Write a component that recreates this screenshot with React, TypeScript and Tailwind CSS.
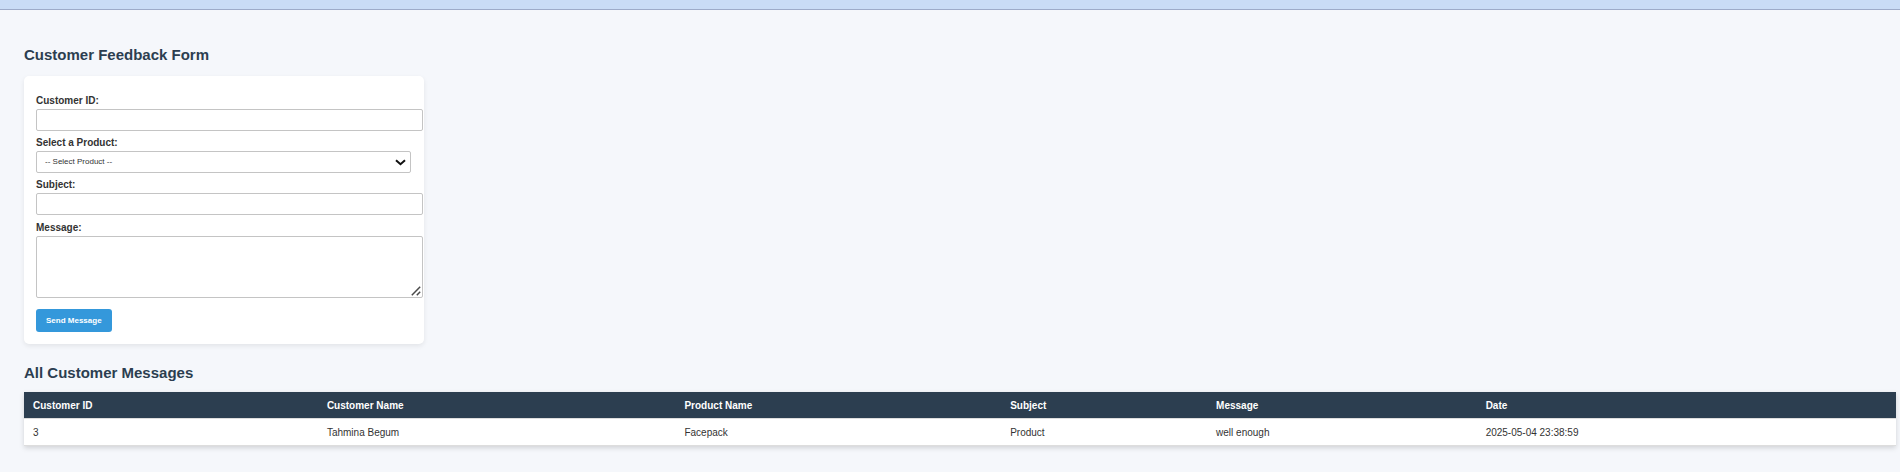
import React from "react";

type Message = {
  customerId: number;
  customerName: string;
  productName: string;
  subject: string;
  message: string;
  date: string;
};

const messages: Message[] = [
  {
    customerId: 3,
    customerName: "Tahmina Begum",
    productName: "Facepack",
    subject: "Product",
    message: "well enough",
    date: "2025-05-04 23:38:59",
  },
];

const columns = [
  { title: "Customer ID", width: "w-[15.7%]" },
  { title: "Customer Name", width: "w-[19.1%]" },
  { title: "Product Name", width: "w-[17.4%]" },
  { title: "Subject", width: "w-[11%]" },
  { title: "Message", width: "w-[14.4%]" },
  { title: "Date", width: "" },
];

const groupClass = "flex flex-col gap-[2px]";
const labelClass = "block text-[10px] leading-3 font-bold text-[#333333]";
const fieldClass =
  "block rounded-[2px] border border-[#c4c4c4] bg-white px-2 text-[8px] text-[#333333] outline-none focus:border-[#3498db]";
const cellClass = "px-[9px] pt-[9px] pb-[7px]";

function FeedbackForm() {
  return (
    <form
      className="flex max-w-[400px] flex-col gap-[6px] rounded-[5px] bg-white pt-[19px] pr-[13px] pb-3 pl-3 shadow-[0_2px_5px_rgba(0,0,0,0.08)]"
      onSubmit={(e) => e.preventDefault()}
    >
      <div className={groupClass}>
        <label htmlFor="customer-id" className={labelClass}>
          Customer ID:
        </label>
        <input id="customer-id" type="text" className={`${fieldClass} -mr-3 h-[22px]`} />
      </div>
      <div className={groupClass}>
        <label htmlFor="product" className={labelClass}>
          Select a Product:
        </label>
        <div className="relative">
          <select id="product" className={`${fieldClass} h-[22px] w-full appearance-none`}>
            <option>-- Select Product --</option>
          </select>
          <svg
            className="pointer-events-none absolute top-2 right-[5px] h-[7px] w-[11px]"
            viewBox="0 0 11 7"
            fill="none"
            stroke="#101010"
            strokeWidth="2"
            aria-hidden="true"
          >
            <path d="M1 1.2 5.5 5.2 10 1.2" />
          </svg>
        </div>
      </div>
      <div className={groupClass}>
        <label htmlFor="subject" className={labelClass}>
          Subject:
        </label>
        <input id="subject" type="text" className={`${fieldClass} -mr-3 h-[22px]`} />
      </div>
      <div className="mt-px flex flex-col gap-[2px]">
        <label htmlFor="message" className={labelClass}>
          Message:
        </label>
        <div className="relative -mr-3">
          <textarea id="message" className={`${fieldClass} h-[62px] w-full resize-none py-1`} />
          <svg
            className="pointer-events-none absolute right-[2px] bottom-[2px] h-[10px] w-[10px]"
            viewBox="0 0 10 10"
            fill="none"
            stroke="#4a4a4a"
            strokeWidth="1.5"
            aria-hidden="true"
          >
            <path d="M0.8 9.2 9.2 0.8M5.8 9.2 9.2 5.8" />
          </svg>
        </div>
      </div>
      <button
        type="submit"
        className="mt-[5px] h-[23px] cursor-pointer self-start rounded-[3px] bg-[#3498db] px-[10px] text-[8px] font-bold text-white hover:bg-[#2980b9]"
      >
        Send Message
      </button>
    </form>
  );
}

function MessagesTable() {
  return (
    <table className="w-full table-fixed border-collapse bg-white text-left text-[10px] leading-[10px] text-[#333333] shadow-[0_2px_5px_rgba(0,0,0,0.15)]">
      <thead className="bg-[#2c3e50] text-white">
        <tr className="border-b border-[#dddddd]">
          {columns.map((c) => (
            <th key={c.title} scope="col" className={`${c.width} ${cellClass} font-bold`}>
              {c.title}
            </th>
          ))}
        </tr>
      </thead>
      <tbody>
        {messages.map((m) => (
          <tr key={m.date} className="border-b border-[#dddddd]">
            <td className={cellClass}>{m.customerId}</td>
            <td className={cellClass}>{m.customerName}</td>
            <td className={cellClass}>{m.productName}</td>
            <td className={cellClass}>{m.subject}</td>
            <td className={cellClass}>{m.message}</td>
            <td className={cellClass}>{m.date}</td>
          </tr>
        ))}
      </tbody>
    </table>
  );
}

export default function App() {
  return (
    <div className="min-h-screen bg-[#f5f7fb] font-['Liberation_Sans',Arial,sans-serif]">
      <div className="h-[10px] border-b border-[#9dabc9] bg-[#c9dcf6]" />
      <main className="pt-9 pr-1 pb-6 pl-6">
        <h2 className="mb-3 text-[15px] leading-[18px] font-bold text-[#2c3e50]">
          Customer Feedback Form
        </h2>
        <FeedbackForm />
        <h2 className="mt-5 mb-[10px] text-[15px] leading-[18px] font-bold text-[#2c3e50]">
          All Customer Messages
        </h2>
        <MessagesTable />
      </main>
    </div>
  );
}
